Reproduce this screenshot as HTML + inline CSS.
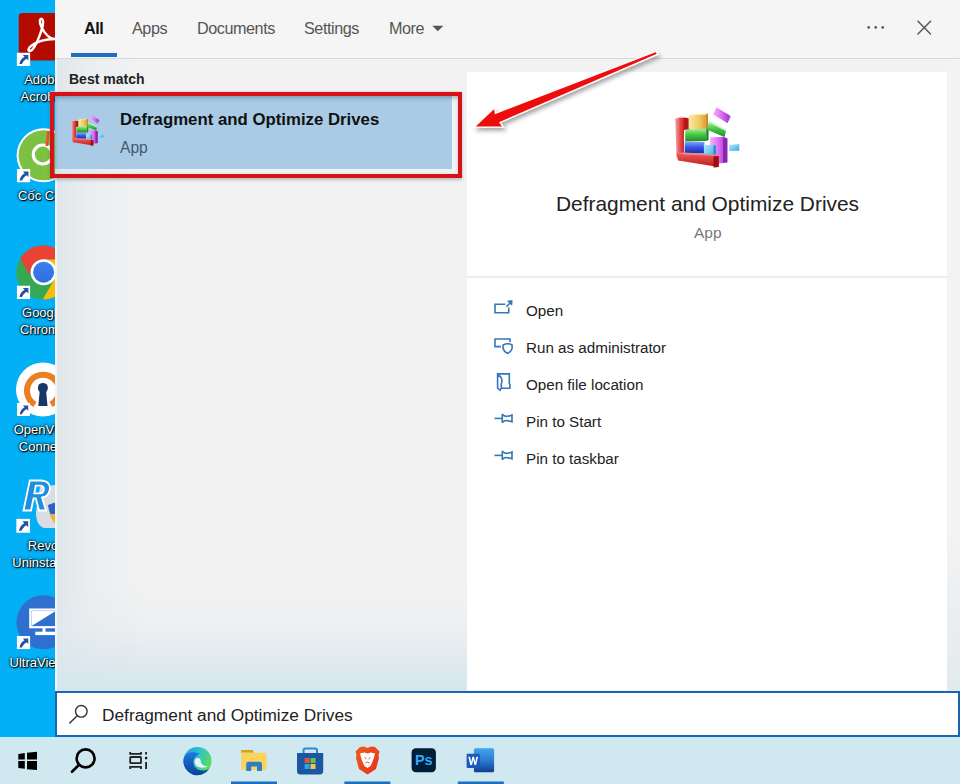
<!DOCTYPE html>
<html><head><meta charset="utf-8">
<style>
*{margin:0;padding:0;box-sizing:border-box}
html,body{width:960px;height:784px;overflow:hidden;background:#03aff5;font-family:"Liberation Sans",sans-serif}
.abs{position:absolute}
#desk{left:0;top:0;width:55px;height:737px;background:#03aff5}
#panel{left:55px;top:0;width:905px;height:737px;background:#f2f2f2}
#topbar{left:55px;top:0;width:905px;height:58px;background:#f5f5f5}
#sep{left:55px;top:58px;width:905px;height:1px;background:#d9d9d9}
.tab{top:19.4px;font-size:16.2px;letter-spacing:-0.45px;color:#555;white-space:nowrap}
#leftpane{left:55px;top:59px;width:412px;height:633px;
 background:
  linear-gradient(to top, rgba(212,230,238,1) 0px, rgba(218,231,237,.8) 28px, rgba(228,235,239,.4) 65px, rgba(242,242,242,0) 105px),
  linear-gradient(to right, rgba(222,230,234,.95) 0px, rgba(230,235,238,.6) 35px, rgba(240,240,240,0) 90px),
  #f2f2f2}
#leftpane:before{content:"";position:absolute;left:0;top:0;width:1.5px;height:100%;background:rgba(245,250,252,.8)}
#card{left:467px;top:72px;width:480px;height:618px;background:#fff}
#rightstrip{left:947px;top:59px;width:13px;height:633px;background:linear-gradient(to bottom,#f3f3f3 0,#f3f3f3 75%,#e2eaee 100%)}
#sel{left:55px;top:96px;width:397px;height:73px;background:#a9cbe6}
#redbox{left:50px;top:92px;width:412px;height:86px;border:4px solid #d51219;box-shadow:0 2px 3px rgba(0,0,0,.22),0 -1px 1px rgba(255,200,200,.6),inset 1px 2px 4px rgba(40,50,70,.35)}
#search{left:55px;top:691px;width:905px;height:46px;background:#fff;border:2px solid #1a64b4;border-bottom-width:2.5px}
#taskbar{left:0;top:737px;width:960px;height:47px;background:#d0e8ef;border-top:1.5px solid #c4ecf8}
.lbl{left:-7px;width:100px;text-align:center;color:#fff;font-size:13px;line-height:16.5px;text-shadow:0 0 2px #000,0 0 3px rgba(0,0,0,.8),1px 1px 1px #000;white-space:nowrap}
.act{left:526px;font-size:15.2px;color:#222;white-space:nowrap}
</style></head><body>
<div class="abs" id="desk"></div>
<svg class="abs" style="left:0;top:0" width="55" height="737" viewBox="0 0 55 737">
<defs>
<symbol id="sc" viewBox="0 0 14 14">
<rect x="0" y="0" width="14" height="14" fill="#fff"/>
<path d="M6.2 2.6 L12 2.6 L12 8.4 L10.1 6.5 C7.6 8.3 6.2 10 5.4 12 L2.8 12 C3.4 8.4 5.4 6 8.1 4.5 Z" fill="#2050a8"/>
</symbol>
<linearGradient id="chr" x1="0" y1="0" x2="0" y2="1"><stop offset="0" stop-color="#3b7ef0"/><stop offset="1" stop-color="#2f6fdf"/></linearGradient>
</defs>
<!-- Adobe -->
<rect x="18.7" y="13" width="50" height="47.6" rx="4" fill="#b30b00"/>
<path d="M32 50 C28 53 27 49 31 46 C36 42 46 39 56 39 C50 40 44 33 41 26 C39 21 40 18 42 19 C45 21 41 33 37 42 C35 46 33 49 32 50 Z" fill="none" stroke="#fff" stroke-width="2.4"/>
<use href="#sc" x="16.5" y="52.5" width="14" height="13.5"/>
<!-- Coc Coc -->
<circle cx="43.6" cy="155.3" r="27" fill="#fff"/>
<circle cx="43.6" cy="155.3" r="25" fill="#7cc142"/>
<circle cx="42.8" cy="154.5" r="9.5" fill="none" stroke="#fff" stroke-width="3.2"/>
<path d="M47 131 L50 131 L48 146 L45.5 146 Z" fill="#e8542a"/>
<use href="#sc" x="16.8" y="168.8" width="13.6" height="13.8"/>
<!-- Chrome -->
<circle cx="43.3" cy="272.5" r="27" fill="#34a853"/>
<path d="M20.21 258.51 A27 27 0 0 1 66.96 259.5 L43.3 259.5 A13 13 0 0 0 32.04 279 Z" fill="#ea4335"/>
<path d="M66.96 259.5 A27 27 0 0 1 42.73 299.49 L54.56 279 A13 13 0 0 0 43.3 259.5 Z" fill="#fbbc04"/>
<circle cx="43.6" cy="272.2" r="13" fill="#fff"/>
<circle cx="43.6" cy="272.2" r="10.5" fill="url(#chr)"/>
<use href="#sc" x="16.7" y="285.5" width="13.7" height="13.5"/>
<!-- OpenVPN -->
<circle cx="43" cy="389.5" r="27" fill="#fff"/>
<path d="M35 404.5 A16 16 0 1 1 51 404.5" fill="none" stroke="#ea7e20" stroke-width="6"/>
<circle cx="42.9" cy="387.9" r="5" fill="#1a3668"/>
<path d="M39.8 390 L46 390 L47.5 406 L38.3 406 Z" fill="#1a3668"/>
<use href="#sc" x="16.9" y="403" width="13.3" height="13"/>
<!-- Revo -->
<path d="M40 487 L62 484 L62 528 L44 528 C38 526 36 520 36 512 Z" fill="#d8dde3"/>
<path d="M48 505 L62 500 L62 522 C55 522 50 518 48 505 Z" fill="#2a62c8"/>
<path d="M50 514 L62 514 L62 526 C56 526 52 522 50 514 Z" fill="#f0b030"/>
<path d="M23.5 510.5 L29.8 480.5 L40.5 480.5 C48.5 480.5 51 485.5 49.5 491 C48.5 494.8 45.5 497 42 497.5 L46 510.5 L39 510.5 L35.8 498.5 L33.5 498.5 L31 510.5 Z M34.3 493.3 L39.8 493.3 C42.3 493.3 43.5 491.8 43.8 489.8 C44.1 487.6 42.8 485.7 40.3 485.7 L35.8 485.7 Z" fill="#1e8ee0" stroke="#fff" stroke-width="1.8"/>
<use href="#sc" x="16.2" y="518.5" width="14" height="14.5"/>
<!-- UltraViewer -->
<circle cx="43.5" cy="622.3" r="27" fill="#2f6fcf"/>
<rect x="30.3" y="609.6" width="30" height="17.6" fill="none" stroke="#fff" stroke-width="2.2"/>
<path d="M31.5 611 L56 611 L31.5 626 Z" fill="#fff"/>
<rect x="42.5" y="627" width="3" height="5" fill="#fff"/>
<rect x="35.3" y="631.7" width="20" height="3.4" fill="#fff"/>
<use href="#sc" x="16.5" y="636" width="14" height="13.3"/>
</svg>
<div class="abs lbl" style="top:72px">Adobe<br>Acrobat</div>
<div class="abs lbl" style="top:188px">Cốc Cốc</div>
<div class="abs lbl" style="top:305px">Google<br>Chrome</div>
<div class="abs lbl" style="top:422px">OpenVPN<br>Connect</div>
<div class="abs lbl" style="top:538px">Revo<br>Uninstaller</div>
<div class="abs lbl" style="top:655px">UltraViewer</div>

<div class="abs" id="panel"></div>
<div class="abs" id="leftpane"></div>
<div class="abs" id="rightstrip"></div>
<div class="abs" id="topbar"></div>
<div class="abs" id="sep"></div>
<div class="abs" style="left:71px;top:53px;width:46px;height:4px;background:#1a6fc0"></div>
<div class="abs tab" style="left:84px;color:#111;font-weight:bold">All</div>
<div class="abs tab" style="left:132px">Apps</div>
<div class="abs tab" style="left:197px">Documents</div>
<div class="abs tab" style="left:304px">Settings</div>
<div class="abs tab" style="left:389px">More</div>
<svg class="abs" style="left:0;top:0" width="960" height="70" viewBox="0 0 960 70">
<path d="M432.3 25.7 L443.3 25.7 L437.8 31.2 Z" fill="#555"/>
<circle cx="868.7" cy="27.4" r="1.3" fill="#555"/>
<circle cx="875.7" cy="27.4" r="1.3" fill="#555"/>
<circle cx="882.7" cy="27.4" r="1.3" fill="#555"/>
<path d="M917.5 20.7 L931 34.4 M931 20.7 L917.5 34.4" stroke="#555" stroke-width="1.4"/>
</svg>

<div class="abs" style="left:69px;top:71px;font-size:14px;font-weight:bold;color:#222">Best match</div>

<div class="abs" id="sel"></div>
<div class="abs" id="redbox"></div>
<svg class="abs" style="left:68.4px;top:111.9px" width="40" height="37.5" viewBox="0 0 80 75">
<defs>
<linearGradient id="dRedF" x1="0" y1="0" x2="1" y2="0"><stop offset="0" stop-color="#f4a4a4"/><stop offset=".6" stop-color="#e44848"/><stop offset="1" stop-color="#c82828"/></linearGradient>
<linearGradient id="dRedB" x1="0" y1="0" x2="0" y2="1"><stop offset="0" stop-color="#ee5a5a"/><stop offset="1" stop-color="#c01c1c"/></linearGradient>
<linearGradient id="dYel" x1="0" y1="0" x2="1" y2="0"><stop offset="0" stop-color="#fbe9a8"/><stop offset=".65" stop-color="#f0c860"/><stop offset="1" stop-color="#d8a030"/></linearGradient>
<linearGradient id="dGrn" x1="0" y1="0" x2="0" y2="1"><stop offset="0" stop-color="#a8f098"/><stop offset=".45" stop-color="#48c848"/><stop offset="1" stop-color="#208a28"/></linearGradient>
<linearGradient id="dBlu" x1="0" y1="0" x2="0" y2="1"><stop offset="0" stop-color="#8aa8f8"/><stop offset=".45" stop-color="#3a5ae8"/><stop offset="1" stop-color="#1a2ca8"/></linearGradient>
<linearGradient id="dCyn" x1="0" y1="0" x2="1" y2="1"><stop offset="0" stop-color="#b8ecff"/><stop offset="1" stop-color="#38a8e8"/></linearGradient>
<linearGradient id="dPur" x1="0" y1="0" x2="1" y2="0"><stop offset="0" stop-color="#f4b0fc"/><stop offset=".55" stop-color="#d868f0"/><stop offset="1" stop-color="#9a30c0"/></linearGradient>
<filter id="dBlur"><feGaussianBlur stdDeviation="0.45"/></filter>
<symbol id="defrag" viewBox="0 0 80 75">
<g filter="url(#dBlur)">
<!-- pink slab -->
<path d="M48.5 7.5 L62 15.5 L58.5 22.5 L45 14.5 Z" fill="url(#dPur)"/>
<path d="M58.5 22.5 L62 15.5 L62.5 17 L59.5 23 Z" fill="#9a30c0"/>
<!-- red L vertical -->
<path d="M7.2 18.5 L16 17.5 L16 57 L8.6 58 Z" fill="url(#dRedF)"/>
<path d="M16 17.5 L22.5 18.5 L22.5 30 L16 30 Z" fill="#b81818"/>
<path d="M7.2 18.5 L13 16.5 L22.5 18.5 L16 17.5 Z" fill="#f6b0b0"/>
<!-- yellow -->
<path d="M20.6 15.5 L37.8 14.4 L37.8 29 L20.6 29.5 Z" fill="url(#dYel)"/>
<path d="M20.6 15.5 L24 13.8 L40 13.2 L37.8 14.4 Z" fill="#fcefc0"/>
<path d="M37.8 14.4 L40 13.2 L40 28 L37.8 29 Z" fill="#c88a20"/>
<!-- green -->
<path d="M17.2 29.5 L38.3 28.7 L38.3 41.1 L17.2 41.5 Z" fill="url(#dGrn)"/>
<path d="M38.3 28.7 L40.5 28 L40.5 40 L38.3 41.1 Z" fill="#1a7a20"/>
<!-- green slab -->
<path d="M40.5 22 L58 31 L56.5 37 L39.5 30 Z" fill="url(#dGrn)"/>
<path d="M40.5 22 L58 31 L58.5 29.5 L41.5 21 Z" fill="#c8f8b8"/>
<!-- purple -->
<path d="M42.1 37.5 L56 36.8 L59.3 38.5 L59.3 62.2 L48 64 L42.1 60 Z" fill="url(#dPur)"/>
<path d="M55 38 L59.3 38.5 L59.3 62.2 L55 63 Z" fill="#8a28b0"/>
<!-- blue -->
<path d="M16.7 41.5 L36.4 42 L36.4 53.6 L16.7 53.6 Z" fill="url(#dBlu)"/>
<!-- cyan -->
<path d="M35.9 44.5 L47.8 45.5 L47.8 56.5 L35.9 56.5 Z" fill="url(#dCyn)"/>
<path d="M45.5 45.3 L47.8 45.5 L47.8 56.5 L45.5 56.5 Z" fill="#2a88c8"/>
<!-- red L bottom -->
<path d="M8.6 53 L16.7 53.6 L47 55.5 L50.7 56 L50.7 67 L10 60.5 Z" fill="url(#dRedB)"/>
<path d="M8.6 53 L16.7 52.5 L47 54.5 L50.7 56 L16 54.5 Z" fill="#f08888"/>
<path d="M45.5 56.5 L50.7 56 L50.7 67 L45.5 67.5 Z" fill="#a01010"/>
<!-- cyan slab -->
<path d="M61.2 45 L71.3 44 L71.3 50.7 L61.2 51 Z" fill="url(#dCyn)"/>
</g>
</symbol></defs>
<use href="#defrag" x="0" y="0" width="80" height="75"/>
</svg>
<div class="abs" style="left:120px;top:110px;font-size:16.8px;font-weight:bold;color:#111;white-space:nowrap">Defragment and Optimize Drives</div>
<div class="abs" style="left:120px;top:139px;font-size:15.6px;color:#46596b">App</div>

<div class="abs" id="card"></div>
<div class="abs" style="left:467px;top:276px;width:480px;height:2px;background:#ececec"></div>
<svg class="abs" style="left:668px;top:100px" width="80" height="75" viewBox="0 0 80 75"><use href="#defrag" x="0" y="0" width="80" height="75"/></svg>
<div class="abs" style="left:556px;top:192px;font-size:20.9px;color:#222;white-space:nowrap">Defragment and Optimize Drives</div>
<div class="abs" style="left:694px;top:224px;font-size:15.5px;color:#777">App</div>

<svg class="abs" style="left:480px;top:290px" width="50" height="190" viewBox="480 290 50 190" fill="none" stroke="#3876b6" stroke-width="1.6">
<path d="M505.3 304.2 H495 V312.8 H508.7 V307.5"/>
<path d="M506.3 306.7 L510 303"/>
<path d="M507.6 301 L512.2 300.6 L511.8 305.2 Z" fill="#3876b6" stroke-width="0.8"/>
<path d="M501 346.6 H495 V339 H510 V342"/>
<path d="M503.1 345 Q507.6 342.6 512.1 345 V348.5 Q511 352 507.6 353.3 Q504.2 352 503.1 348.5 Z"/>
<path d="M501.3 388.3 H509.9 V384.5 L509.3 383.5 V373.9 H497.6 V388 L500 390.3 L501.3 388.3 V384 Q502.3 381 501.5 378.3 Q500.8 376.5 498.3 375"/>
<path d="M494.5 418.4 H502"/>
<path d="M502.3 413.8 V423 M502.3 414.3 Q504.3 416.6 507 416.3 Q510 416 512 415 V421.8 Q510 420.8 507 420.6 Q504.3 420.3 502.3 422.6"/>
<path d="M494.5 455.4 H502"/>
<path d="M502.3 450.8 V460 M502.3 451.3 Q504.3 453.6 507 453.3 Q510 453 512 452 V458.8 Q510 457.8 507 457.6 Q504.3 457.3 502.3 459.6"/>
</svg>
<div class="abs act" style="top:302px">Open</div>
<div class="abs act" style="top:339px">Run as administrator</div>
<div class="abs act" style="top:376px">Open file location</div>
<div class="abs act" style="top:413px">Pin to Start</div>
<div class="abs act" style="top:450px">Pin to taskbar</div>

<svg class="abs" style="left:440px;top:40px" width="240" height="100" viewBox="440 40 240 100">
<defs><filter id="ash" x="-20%" y="-20%" width="140%" height="160%"><feGaussianBlur in="SourceAlpha" stdDeviation="2"/><feOffset dx="2" dy="3"/><feComponentTransfer><feFuncA type="linear" slope="0.35"/></feComponentTransfer><feMerge><feMergeNode/><feMergeNode in="SourceGraphic"/></feMerge></filter></defs>
<path d="M656 51.3 L495.4 113.3 L494.6 107.9 L474.2 127.1 L503.3 127.1 L500 122.5 L657.8 54.2 Z" fill="#ee1111" stroke="#fff" stroke-width="1.3" stroke-linejoin="miter" filter="url(#ash)"/>
</svg>

<div class="abs" id="search"></div>
<svg class="abs" style="left:60px;top:698px" width="36" height="32" viewBox="60 698 36 32" fill="none" stroke="#333" stroke-width="1.4">
<circle cx="81.3" cy="711.35" r="5.8"/>
<path d="M69.8 723.1 L77.2 715.7" stroke-linecap="round"/>
</svg>
<div class="abs" style="left:102px;top:705px;font-size:17.3px;color:#222;white-space:nowrap">Defragment and Optimize Drives</div>

<div class="abs" id="taskbar"></div>
<svg class="abs" style="left:0;top:737px" width="520" height="47" viewBox="0 737 520 47">
<defs>
<linearGradient id="edgeG" x1="0" y1="0" x2="1" y2="0.5"><stop offset="0" stop-color="#1f9ae8"/><stop offset=".5" stop-color="#30bfd0"/><stop offset="1" stop-color="#58dc60"/></linearGradient>
<linearGradient id="edgeB" x1="0" y1="0" x2="0" y2="1"><stop offset="0" stop-color="#1b7ae0"/><stop offset="1" stop-color="#0e3f9a"/></linearGradient>
<linearGradient id="wordG" x1="0" y1="0" x2="0" y2="1"><stop offset="0" stop-color="#41a5ee"/><stop offset=".5" stop-color="#2b7cd3"/><stop offset="1" stop-color="#103f91"/></linearGradient>
<linearGradient id="braveG" x1="0" y1="0" x2="1" y2="1"><stop offset="0" stop-color="#f25a20"/><stop offset="1" stop-color="#e8301a"/></linearGradient>
</defs>
<!-- start -->
<path d="M18.3 754 L24.8 752.9 L24.8 759.4 L18.3 759.4 Z M27 752.7 L37 751.8 L37 759.4 L27 759.4 Z M18.3 761.1 L24.8 761.1 L24.8 768.7 L18.3 767.9 Z M27 761.1 L37 761.1 L37 770 L27 769.2 Z" fill="#000"/>
<!-- search -->
<circle cx="85.6" cy="758.4" r="9" fill="none" stroke="#000" stroke-width="2.6"/>
<path d="M72 771.8 L78.6 765.3" stroke="#000" stroke-width="2.6" stroke-linecap="round"/>
<!-- task view -->
<g fill="none" stroke="#222" stroke-width="1.8">
<path d="M130.2 752 V753.9 H141 V752"/>
<rect x="130.2" y="757" width="10.8" height="6.2" rx="0.8"/>
<path d="M130.2 768.9 V766.9 H141 V768.9"/>
<path d="M146.1 752 V754.5 M146.1 762 V768.9"/>
</g>
<circle cx="146.1" cy="758.1" r="1.3" fill="#111"/>
<!-- edge -->
<circle cx="197.5" cy="761" r="14" fill="url(#edgeG)"/>
<path d="M183.5 759.5 A14 14 0 0 0 209.2 768.8 C204.5 771.8 197 771 194.3 766.3 C192.3 762.3 193.3 756.5 199.5 753.8 C192 750.3 184.5 753 183.5 759.5 Z" fill="url(#edgeB)"/>
<path d="M194.6 761.3 C194.6 757.9 198.4 757 200.3 759.2 C201 760.5 200.5 762.3 202 764.2 C203.5 766 206.3 766.3 208.2 765.8 C205 768.3 199.8 768.2 197 766.3 C195.5 765.2 194.6 763.5 194.6 761.3 Z" fill="#e6f3f9"/>
<!-- explorer -->
<path d="M241.2 750 H252.5 L254 752.7 H241.2 Z" fill="#d9a010"/>
<rect x="241.2" y="752.7" width="25.2" height="17.3" rx="1" fill="#f9d35c"/>
<path d="M246.2 770.9 V764 Q246.2 761.8 248.4 761.8 H259.8 Q262 761.8 262 764 V770.9 H257 V766.5 H251.2 V770.9 Z" fill="#2f7fc8"/>
<rect x="231" y="781.5" width="46" height="2.5" fill="#1a6fc0"/>
<!-- store -->
<path d="M303.5 753 V750.5 Q303.5 748.6 305.5 748.6 H315 Q317 748.6 317 750.5 V753" fill="none" stroke="#2a8ad2" stroke-width="2"/>
<path d="M297 752.9 H323.2 V771 Q323.2 774.4 320 774.4 H300.2 Q297 774.4 297 771 Z" fill="#1b56a2"/>
<rect x="304.6" y="758" width="5" height="5" fill="#e0563c"/>
<rect x="310.5" y="758" width="5" height="5" fill="#6cc04a"/>
<rect x="304.6" y="764" width="5" height="5" fill="#2ea5e8"/>
<rect x="310.5" y="764" width="5" height="5" fill="#f5c842"/>
<!-- brave -->
<path d="M360 747 L364 746.6 L367.5 748 L371 746.6 L375 747 L379.5 751.5 L378.5 755 L379 758 L376 769 L367.5 774.4 L359 769 L356 758 L356.5 755 L355.5 751.5 Z" fill="url(#braveG)"/>
<path d="M360 753.5 L364.5 752.5 L367.5 753.5 L370.5 752.5 L375 753.5 L374 757.5 L372 763 L370.5 766 L367.5 768 L364.5 766 L363 763 L361 757.5 Z" fill="#fff"/>
<path d="M364.5 757.5 L366.5 759 M370.5 757.5 L368.5 759 M365.5 763 L367.5 762 L369.5 763" stroke="#d9542a" stroke-width="1" fill="none"/>
<rect x="344.4" y="781.5" width="46" height="2.5" fill="#1a6fc0"/>
<!-- ps -->
<rect x="411.6" y="748.3" width="24.3" height="23.9" rx="4.2" fill="#001e36"/>
<text x="423.8" y="765.4" text-anchor="middle" font-family="Liberation Sans" font-weight="bold" font-size="14.5" fill="#31a8ff">Ps</text>
<!-- word -->
<rect x="473.9" y="748.3" width="20.2" height="23.9" rx="1.5" fill="url(#wordG)"/>
<rect x="466.6" y="753.8" width="13.2" height="14.1" rx="1" fill="#185abd"/>
<path d="M468.3 756.8 L470.3 765 L472 765 L473.2 759.8 L474.4 765 L476.1 765 L478.1 756.8 L476.4 756.8 L475.2 762 L474 756.8 L472.4 756.8 L471.2 762 L470 756.8 Z" fill="#fff"/>
<rect x="457.8" y="781.5" width="46" height="2.5" fill="#1a6fc0"/>
</svg>

</body></html>
